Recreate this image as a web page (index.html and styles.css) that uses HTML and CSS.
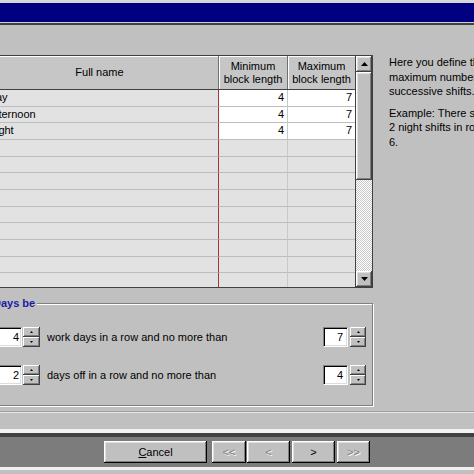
FILE: index.html
```html
<!DOCTYPE html>
<html>
<head>
<meta charset="utf-8">
<link rel="stylesheet" href="styles.css">
</head>
<body>
<div class="topstrip"></div>
<div class="titlebar"></div>
<div class="titleedge"></div>
<div class="main">
  <div class="leftcol">
    <div class="table">
      <div class="tcols">
        <div class="thead">
          <div class="th">Full name</div>
          <div class="th">Minimum<br>block length</div>
          <div class="th last">Maximum<br>block length</div>
        </div>
        <div class="tbody">
          <div class="tr"><div class="td name">Day</div><div class="td num val">4</div><div class="td num val last">7</div></div>
          <div class="tr"><div class="td name">Afternoon</div><div class="td num val">4</div><div class="td num val last">7</div></div>
          <div class="tr"><div class="td name">Night</div><div class="td num val">4</div><div class="td num val last">7</div></div>
          <div class="tr"><div class="td name"></div><div class="td num"></div><div class="td num last"></div></div>
          <div class="tr"><div class="td name"></div><div class="td num"></div><div class="td num last"></div></div>
          <div class="tr"><div class="td name"></div><div class="td num"></div><div class="td num last"></div></div>
          <div class="tr"><div class="td name"></div><div class="td num"></div><div class="td num last"></div></div>
          <div class="tr"><div class="td name"></div><div class="td num"></div><div class="td num last"></div></div>
          <div class="tr"><div class="td name"></div><div class="td num"></div><div class="td num last"></div></div>
          <div class="tr"><div class="td name"></div><div class="td num"></div><div class="td num last"></div></div>
          <div class="tr"><div class="td name"></div><div class="td num"></div><div class="td num last"></div></div>
          <div class="tr"><div class="td name"></div><div class="td num"></div><div class="td num last"></div></div>
        </div>
      </div>
      <div class="vscroll">
        <div class="sbtn"><svg width="7" height="4" viewBox="0 0 7 4"><polygon points="0,4 7,4 3.5,0" fill="#000"/></svg></div>
        <div class="thumb"></div>
        <div class="track"></div>
        <div class="sbtn"><svg width="7" height="4" viewBox="0 0 7 4"><polygon points="0,0 7,0 3.5,4" fill="#000"/></svg></div>
      </div>
    </div>
    <fieldset class="group">
      <legend>Days be</legend>
      <div class="spinrow first">
        <div class="spin">
          <div class="inp wide">4</div>
          <div class="spinbtns"><span><svg width="3" height="2" viewBox="0 0 3 2"><polygon points="0,2 3,2 1.5,0" fill="#000"/></svg></span><span><svg width="3" height="2" viewBox="0 0 3 2"><polygon points="0,0 3,0 1.5,2" fill="#000"/></svg></span></div>
        </div>
        <div class="lbl">work days in a row and no more than</div>
        <div class="spin right">
          <div class="inp narrow">7</div>
          <div class="spinbtns sm"><span><svg width="3" height="2" viewBox="0 0 3 2"><polygon points="0,2 3,2 1.5,0" fill="#000"/></svg></span><span><svg width="3" height="2" viewBox="0 0 3 2"><polygon points="0,0 3,0 1.5,2" fill="#000"/></svg></span></div>
        </div>
      </div>
      <div class="spinrow second">
        <div class="spin">
          <div class="inp wide">2</div>
          <div class="spinbtns"><span><svg width="3" height="2" viewBox="0 0 3 2"><polygon points="0,2 3,2 1.5,0" fill="#000"/></svg></span><span><svg width="3" height="2" viewBox="0 0 3 2"><polygon points="0,0 3,0 1.5,2" fill="#000"/></svg></span></div>
        </div>
        <div class="lbl">days off in a row and no more than</div>
        <div class="spin right">
          <div class="inp narrow">4</div>
          <div class="spinbtns sm"><span><svg width="3" height="2" viewBox="0 0 3 2"><polygon points="0,2 3,2 1.5,0" fill="#000"/></svg></span><span><svg width="3" height="2" viewBox="0 0 3 2"><polygon points="0,0 3,0 1.5,2" fill="#000"/></svg></span></div>
        </div>
      </div>
    </fieldset>
  </div>
  <div class="help">
    <p>Here you define the minimum and<br>maximum number of<br>successive shifts.</p>
    <p>Example: There should be at least<br>2 night shifts in row and no more than<br>6.</p>
  </div>
</div>
<div class="etch"></div>
<div class="gap"></div>
<div class="fwhite"></div>
<div class="fdark"></div>
<div class="bar">
  <div class="btn cancel"><span><u>C</u>ancel</span></div>
  <div class="btn nav first-nav dis">&lt;&lt;</div>
  <div class="btn nav prev dis">&lt;</div>
  <div class="btn nav next">&gt;</div>
  <div class="btn nav last-nav dis">&gt;&gt;</div>
</div>
<div class="fwhite2"></div>
</body>
</html>
```

FILE: styles.css
```css
html, body {
  margin: 0;
  padding: 0;
}
body {
  width: 474px;
  height: 474px;
  overflow: hidden;
  background: #c0c0c0;
  font: 11px "Liberation Sans", Arial, sans-serif;
  color: #000;
}
.topstrip { height: 3px; background: #d8d8d8; }
.titlebar { height: 19px; background: #000080; }
.titleedge { height: 1px; background: #cfcfcf; border-bottom: 2px solid #404040; }

.main {
  height: 386px;
  box-sizing: border-box;
  padding-top: 30px;
  display: flex;
  align-items: flex-start;
}
.leftcol {
  margin-left: -20px;
  width: 393px;
  flex-shrink: 0;
}
.table {
  display: flex;
  height: 233px;
  box-sizing: border-box;
  border: 1px solid #404040;
  background: #e2e2e2;
}
.tcols {
  width: 374px;
  display: flex;
  flex-direction: column;
  overflow: hidden;
}
.thead {
  display: grid;
  grid-template-columns: 238px 69px 67px;
  height: 34px;
  flex-shrink: 0;
  box-sizing: border-box;
  border-bottom: 1px solid #404040;
}
.th {
  display: flex;
  align-items: center;
  justify-content: center;
  text-align: center;
  line-height: 13px;
  background: #c6c6c6;
  border-right: 1px solid #707070;
  box-shadow: inset 1px 1px #ffffff;
}
.th.last { border-right: 0; }
.tbody { flex: 1; overflow: hidden; }
.tr {
  display: grid;
  grid-template-columns: 238px 69px 67px;
  height: 16.67px;
}
.td {
  box-sizing: border-box;
  border-bottom: 1px solid #bdbdbd;
  line-height: 15px;
  white-space: nowrap;
  overflow: hidden;
}
.name { border-right: 1px solid #a83434; padding-left: 7px; }
.num { border-right: 1px solid #c8c8c8; text-align: right; padding-right: 3px; }
.num.last { border-right: 0; }
.val { background: #ffffff; }

.vscroll {
  width: 16px;
  border-left: 1px solid #404040;
  display: flex;
  flex-direction: column;
}
.sbtn, .thumb {
  box-sizing: border-box;
  background: #c0c0c0;
  box-shadow: inset -1px -1px #404040, inset 1px 1px #ffffff, inset -2px -2px #808080, inset 2px 2px #dfdfdf;
}
.sbtn {
  height: 16px;
  display: flex;
  align-items: center;
  justify-content: center;
}
.sbtn svg { display: block; }
.thumb { height: 108px; }
.track {
  flex: 1;
  background: repeating-conic-gradient(#ffffff 0 25%, #c8c8c8 0 50%) 0 0 / 2px 2px;
}

.group {
  margin: 9px 0 0 0;
  padding: 0 6px 20px 5px;
  border: 1px solid #808080;
  box-shadow: inset 1px 1px #ffffff, 1px 1px #ffffff;
  min-width: 0;
  width: 393px;
  box-sizing: border-box;
}
.group legend {
  margin-left: 5px;
  padding: 0 2px;
  color: #1a1aa8;
  font-weight: bold;
  line-height: 13px;
  background: #c0c0c0;
}
.spinrow {
  display: flex;
  align-items: center;
  height: 20px;
}
.spinrow.first { margin-top: 17px; }
.spinrow.second { margin-top: 18px; }
.spin { display: flex; align-items: center; }
.spin.right { margin-left: auto; }
.inp {
  height: 20px;
  box-sizing: border-box;
  background: #ffffff;
  border: 1px solid;
  border-color: #808080 #ffffff #ffffff #808080;
  box-shadow: inset 1px 1px #000000, inset -1px -1px #dcdcdc;
  text-align: right;
  line-height: 18px;
}
.inp.wide { width: 36px; padding-right: 2px; }
.inp.narrow { width: 25px; padding-right: 4px; }
.spinbtns {
  display: flex;
  flex-direction: column;
  margin-left: 1px;
  width: 17px;
}
.spinbtns.sm { width: 16px; margin-left: 2px; }
.spinbtns span {
  height: 10px;
  box-sizing: border-box;
  background: #c0c0c0;
  box-shadow: inset -1px -1px #404040, inset 1px 1px #ffffff, inset -2px -2px #808080;
  display: flex;
  align-items: center;
  justify-content: center;
}
.spinbtns svg { display: block; }
.lbl { margin-left: 7px; white-space: nowrap; }

.help {
  margin-left: 16px;
  flex-shrink: 0;
}
.help p {
  margin: 0 0 7px 0;
  line-height: 14.5px;
  white-space: nowrap;
}

.etch {
  height: 0;
  border-top: 1px solid #a0a0a0;
  border-bottom: 1px solid #e4e4e4;
}
.gap { height: 16px; }
.fwhite { height: 4px; background: #f2f2f2; }
.fdark { height: 4px; background: #404040; }
.bar {
  height: 30px;
  background: #7c7c7c;
  display: flex;
  align-items: center;
  padding-left: 104px;
}
.fwhite2 { height: 3px; background: #f0f0f0; }
.btn {
  height: 22px;
  box-sizing: border-box;
  background: #c0c0c0;
  box-shadow: inset -1px -1px #000000, inset 1px 1px #ffffff, inset -2px -2px #808080, inset 2px 2px #dfdfdf;
  display: flex;
  align-items: center;
  justify-content: center;
}
.cancel { width: 103px; }
.first-nav { width: 34px; margin-left: 5px; }
.prev { width: 43px; margin-left: 1px; }
.next { width: 43px; margin-left: 2px; }
.last-nav { width: 33px; margin-left: 2px; }
.dis { color: #808080; text-shadow: 1px 1px 0 #ffffff; }
```
